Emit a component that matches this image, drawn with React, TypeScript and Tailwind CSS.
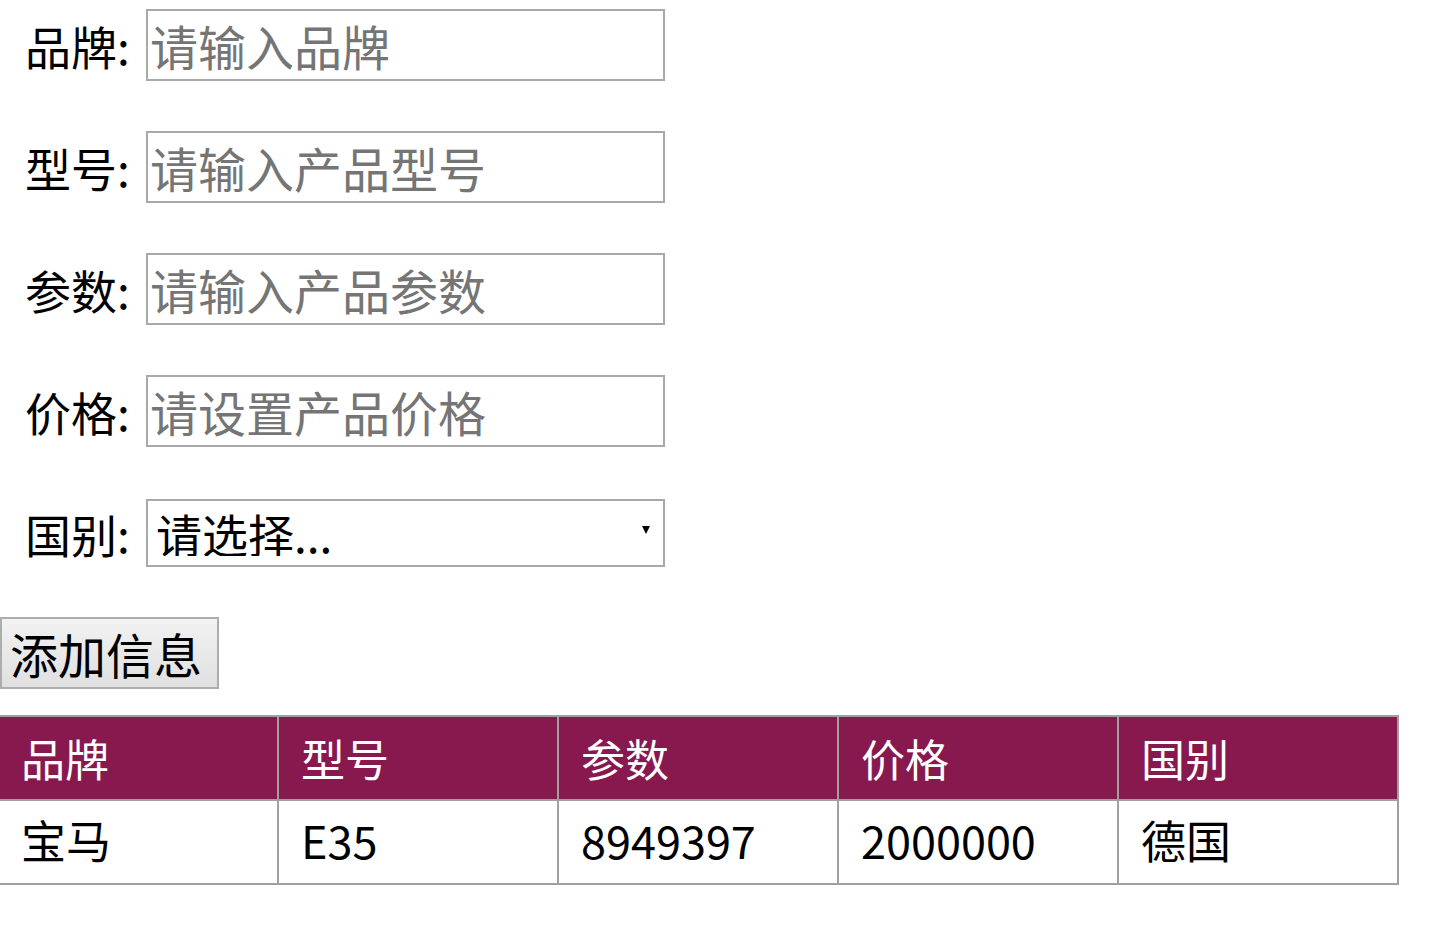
import React from 'react';

const fields = [
  { label: '品牌', placeholder: '请输入品牌' },
  { label: '型号', placeholder: '请输入产品型号' },
  { label: '参数', placeholder: '请输入产品参数' },
  { label: '价格', placeholder: '请设置产品价格' },
];

const headers = ['品牌', '型号', '参数', '价格', '国别'];
const rows = [['宝马', 'E35', '8949397', '2000000', '德国']];

const font = { fontFamily: '"Noto Sans CJK SC", "Microsoft YaHei", sans-serif' };

export default function App() {
  return (
    <div className="min-h-screen bg-white text-black overflow-hidden pt-[9px]" style={font}>
      {fields.map(f => (
        <div key={f.label} className="flex items-center h-[72px] mb-[50px]">
          <label className="pl-[25px] w-[146px] text-[46px] leading-none">{f.label}:</label>
          <input
            type="text"
            placeholder={f.placeholder}
            className="w-[519px] h-[72px] border-2 border-[#a9a9a9] px-[2px] text-[48px] leading-none placeholder:text-[#757575] outline-none"
          />
        </div>
      ))}
      <div className="flex items-center h-[72px] mb-[48px]">
        <label className="pl-[25px] w-[146px] text-[46px] leading-none">国别:</label>
        <div className="relative w-[519px] h-[68px]">
          <select className="appearance-none w-full h-full border-2 border-[#a9a9a9] bg-white pl-[8px] text-[46px] leading-none text-black outline-none">
            <option>请选择...</option>
            <option>德国</option>
            <option>日本</option>
            <option>美国</option>
          </select>
          <span className="absolute right-[15px] top-[27px] w-0 h-0 border-l-[4px] border-r-[4px] border-t-[8px] border-l-transparent border-r-transparent border-t-black pointer-events-none" />
        </div>
      </div>
      <button className="h-[72px] w-[219px] border-2 border-[#adadad] bg-gradient-to-b from-[#f2f2f2] to-[#e0e0e0] text-[48px] leading-none text-black pl-[8px] text-left">
        添加信息
      </button>
      <div className="mt-[26px] -ml-[3px] w-[1402px] border-l-2 border-t-2 border-[#a0a0a0] grid grid-cols-5">
        {headers.map(h => (
          <div key={h} className="h-[84px] flex items-center pl-[22px] bg-[#87194f] text-white text-[44px] border-r-2 border-b-2 border-[#a0a0a0]">
            {h}
          </div>
        ))}
        {rows.map(r =>
          r.map((c, i) => (
            <div key={i} className="h-[84px] flex items-center pl-[22px] pb-[4px] text-black text-[45px] border-r-2 border-b-2 border-[#a0a0a0]">
              {c}
            </div>
          ))
        )}
      </div>
    </div>
  );
}
